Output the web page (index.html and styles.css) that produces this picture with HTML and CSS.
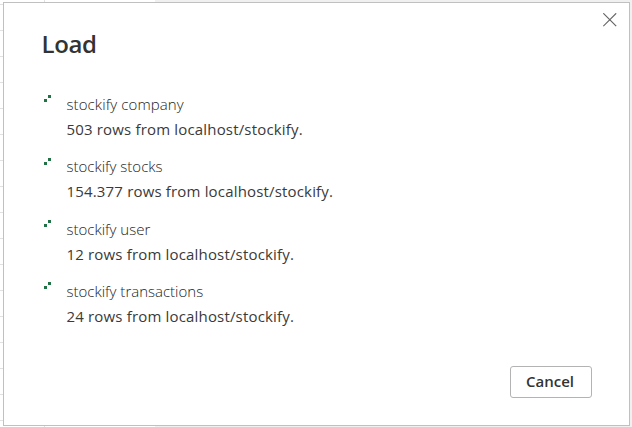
FILE: index.html
```html
<!DOCTYPE html>
<html lang="en">
<head>
<meta charset="utf-8">
<title>Load</title>
<link rel="stylesheet" href="styles.css">
</head>
<body>
<main class="sheet">
  <section class="dialog" role="dialog" aria-labelledby="title">
    <button class="close" aria-label="Close"><svg width="14" height="14" viewBox="0 0 14 14"><path d="M.3 .3l12.9 12.9M13.2 .3l-12.9 12.9"/></svg></button>
    <h1 class="title" id="title">Load</h1>
    <ul class="queries">
      <li class="query"><svg class="busy" width="7" height="7"><path d="M4 0h3v3H4zM0 4h3v3H0z"/></svg><div><p class="name">stockify company</p><p class="status">503 rows from localhost/stockify.</p></div></li>
      <li class="query"><svg class="busy" width="7" height="7"><path d="M4 0h3v3H4zM0 4h3v3H0z"/></svg><div><p class="name">stockify stocks</p><p class="status">154.377 rows from localhost/stockify.</p></div></li>
      <li class="query"><svg class="busy" width="7" height="7"><path d="M4 0h3v3H4zM0 4h3v3H0z"/></svg><div><p class="name">stockify user</p><p class="status">12 rows from localhost/stockify.</p></div></li>
      <li class="query"><svg class="busy" width="7" height="7"><path d="M4 0h3v3H4zM0 4h3v3H0z"/></svg><div><p class="name">stockify transactions</p><p class="status">24 rows from localhost/stockify.</p></div></li>
    </ul>
    <footer class="actions"><button class="cancel">Cancel</button></footer>
  </section>
</main>
</body>
</html>
```
FILE: styles.css
```css
* { box-sizing: border-box; margin: 0; padding: 0; }
body { width: 632px; height: 427px; overflow: hidden; font-family: "Open Sans", "Noto Sans", sans-serif; color: #333; }
.sheet {
  height: 427px;
  padding: 2px 2px 1px 3px;
  background:
    linear-gradient(#f0f0f0, #f0f0f0) 155px 0 / 477px 427px no-repeat,
    linear-gradient(#e1e1e1, #e1e1e1) 44px 0 / 1px 427px no-repeat,
    repeating-linear-gradient(#fff 0 4px, #e1e1e1 4px 5px, #fff 5px 26px);
}
.dialog {
  position: relative;
  display: flex;
  flex-direction: column;
  height: 424px;
  border: 1px solid #c0c0c0;
  background: #fff;
  padding: 25px 37px 27px 37px;
}
.close { position: absolute; top: 10px; right: 12px; width: 14px; height: 14px; border: 0; background: none; }
.close svg { display: block; fill: none; stroke: #666; stroke-width: 1.2; }
.title { padding-left: .5px; font-size: 24px; line-height: 32px; font-weight: 600; letter-spacing: -.4px; }
.queries { list-style: none; padding-top: 32px; }
.query { display: flex; gap: 16px; height: 62.4px; padding-left: 3px; }
.busy { flex: none; margin-top: 3.3px; fill: #217346; shape-rendering: crispEdges; }
.name { font-size: 15px; line-height: 25px; font-weight: 300; margin-left: -.5px; color: #222; }
.query:first-child .name { letter-spacing: .1px; }
.status { font-size: 15px; line-height: 25px; letter-spacing: .17px; margin-left: -.5px; color: #3a3a3a; }
.actions { display: flex; justify-content: flex-end; margin-top: auto; }
.cancel { width: 82px; height: 32px; padding: 0 2px 2px 0; border: 1px solid #b3b3b3; border-radius: 3px; background: #fff; font: 600 15px/20px "Open Sans", sans-serif; color: #333; }
```
